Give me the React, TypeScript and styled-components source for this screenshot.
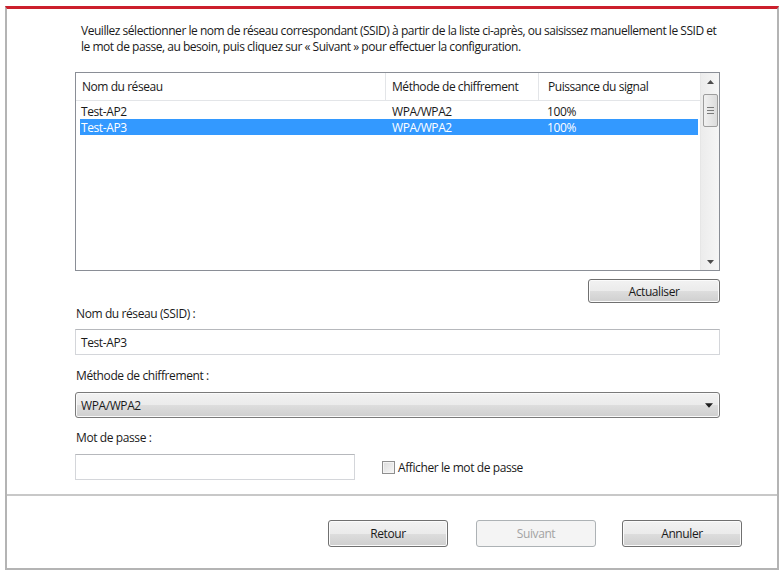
import React from "react";
import styled, { createGlobalStyle, css } from "styled-components";

const GlobalStyle = createGlobalStyle`
  html, body { margin: 0; padding: 0; background: #ffffff; }
  body {
    font-family: "Segoe UI", "Open Sans", "Noto Sans", sans-serif;
    font-size: 12px;
    color: #1a1a1a;
  }
  * { box-sizing: border-box; }
`;

const Frame = styled.div`
  margin: 6px 0 0 5px;
  width: 774px;
  height: 564px;
  border-top: 3px solid #cc1f2c;
  border-left: 2px solid #b4b4b4;
  border-right: 2px solid #b4b4b4;
  border-bottom: 2px solid #b4b4b4;
  display: flex;
  flex-direction: column;
`;

const Main = styled.div`
  flex: 1;
  padding: 14px 57px 0 68px;
  display: flex;
  flex-direction: column;
`;

const Instructions = styled.div`
  padding-left: 6px;
  line-height: 16px;
  letter-spacing: -0.47px;
`;

const Line = styled.div`
  white-space: nowrap;
`;

const ListBox = styled.div`
  margin-top: 17px;
  height: 199px;
  border: 1px solid #8a8e96;
  display: flex;
  background: #fff;
`;

const ListArea = styled.div`
  flex: 1;
  display: flex;
  flex-direction: column;
`;

const Header = styled.div`
  height: 28px;
  border-bottom: 1px solid #e3e5e8;
  display: flex;
  align-items: center;
`;

const HeaderCell = styled.div<{ $w?: number }>`
  ${(p) => (p.$w ? css`width: ${p.$w}px;` : css`flex: 1;`)}
  height: 100%;
  display: flex;
  align-items: center;
  padding-left: 6px;
  letter-spacing: -0.45px;
  border-right: 1px solid #e3e5e8;
  &:last-child { border-right: none; padding-left: 9px; }
`;

const Rows = styled.div`
  padding: 2px 2px 0 4px;
`;

const Row = styled.div<{ $selected?: boolean }>`
  height: 16px;
  display: flex;
  align-items: center;
  letter-spacing: -0.4px;
  ${(p) =>
    p.$selected &&
    css`
      background: #3399ff;
      color: #ffffff;
    `}
`;

const Cell = styled.div<{ $w?: number }>`
  ${(p) => (p.$w ? css`width: ${p.$w}px;` : css`flex: 1;`)}
  padding-left: 1px;
  &:nth-child(2) { padding-left: 7px; }
  &:nth-child(3) { padding-left: 9px; }
`;

const ScrollBar = styled.div`
  width: 19px;
  border-left: 1px solid #e6e6e6;
  background: linear-gradient(to right, #ececec, #f6f6f6);
  display: flex;
  flex-direction: column;
  align-items: center;
`;

const ArrowBtn = styled.div`
  width: 17px;
  height: 17px;
  display: flex;
  align-items: center;
  justify-content: center;
`;

const Thumb = styled.div`
  margin-top: 4px;
  width: 15px;
  height: 33px;
  border: 1px solid #9d9d9d;
  border-radius: 2px;
  background: linear-gradient(to right, #f1f1f1, #dcdcdc);
  display: flex;
  align-items: center;
  justify-content: center;
`;

const Track = styled.div`
  flex: 1;
`;

const Win7Button = styled.button<{ $disabled?: boolean }>`
  font-family: inherit;
  font-size: 12px;
  letter-spacing: -0.4px;
  color: #1a1a1a;
  border: 1px solid #707070;
  border-radius: 3px;
  background: linear-gradient(to bottom, #f2f2f2 0%, #ebebeb 50%, #dddddd 51%, #cfcfcf 100%);
  box-shadow: inset 0 0 0 1px #fbfbfb;
  padding: 0;
  ${(p) =>
    p.$disabled &&
    css`
      color: #a3a3a3;
      border-color: #adb2b5;
      background: #f4f4f4;
      box-shadow: none;
    `}
`;

const RefreshRow = styled.div`
  margin-top: 8px;
  display: flex;
  justify-content: flex-end;
`;

const RefreshButton = styled(Win7Button)`
  width: 132px;
  height: 24px;
`;

const Label = styled.div<{ $top: number }>`
  margin-top: ${(p) => p.$top}px;
  height: 16px;
  line-height: 16px;
  padding-left: 1px;
  letter-spacing: -0.4px;
`;

const TextBox = styled.div<{ $w?: number }>`
  margin-top: 7px;
  height: 26px;
  ${(p) => (p.$w ? css`width: ${p.$w}px;` : "")}
  border: 1px solid #d4d6da;
  border-top-color: #b6b8bc;
  background: #fff;
  display: flex;
  align-items: center;
  padding-left: 5px;
  letter-spacing: -0.4px;
`;

const Select = styled.div`
  margin-top: 8px;
  height: 26px;
  border: 1px solid #7a7a7a;
  border-radius: 3px;
  background: linear-gradient(to bottom, #f2f2f2 0%, #ebebeb 50%, #dddddd 51%, #cfcfcf 100%);
  box-shadow: inset 0 0 0 1px #fafafa;
  display: flex;
  align-items: center;
  justify-content: space-between;
  padding: 0 6px 0 5px;
  letter-spacing: -0.4px;
`;

const PasswordRow = styled.div`
  margin-top: 8px;
  display: flex;
  align-items: center;
`;

const CheckLabel = styled.label`
  margin-left: 27px;
  display: flex;
  align-items: center;
  gap: 3px;
  letter-spacing: -0.4px;
`;

const CheckBox = styled.span`
  width: 13px;
  height: 13px;
  border: 1px solid #8f8f8f;
  background: linear-gradient(135deg, #dcdcdc, #f7f7f7);
  box-shadow: inset 0 0 0 1px #f4f4f4;
`;

const Footer = styled.div`
  height: 74px;
  border-top: 2px solid #c8c8c8;
  display: flex;
  justify-content: flex-end;
  align-items: flex-start;
  padding: 24px 35px 0 0;
`;

const FooterButton = styled(Win7Button)<{ $gap: number }>`
  width: 120px;
  height: 27px;
  margin-left: ${(p) => p.$gap}px;
`;

const UpArrow = () => (
  <svg width="7" height="4" viewBox="0 0 7 4">
    <path d="M0 4 L3.5 0 L7 4 Z" fill="#4d4d4d" />
  </svg>
);

const DownArrow = ({ color = "#4d4d4d", w = 7 }: { color?: string; w?: number }) => (
  <svg width={w} height={Math.round(w / 1.75)} viewBox="0 0 7 4">
    <path d="M0 0 L7 0 L3.5 4 Z" fill={color} />
  </svg>
);

const Grip = () => (
  <svg width="7" height="7" viewBox="0 0 7 7">
    <path d="M0 0.5 H7 M0 3.5 H7 M0 6.5 H7" stroke="#7a7a7a" strokeWidth="1" />
  </svg>
);

const networks = [
  { name: "Test-AP2", method: "WPA/WPA2", signal: "100%", selected: false },
  { name: "Test-AP3", method: "WPA/WPA2", signal: "100%", selected: true },
];

export default function App() {
  return (
    <>
      <GlobalStyle />
      <Frame>
        <Main>
          <Instructions>
            <Line>
              Veuillez sélectionner le nom de réseau correspondant (SSID) à partir de la liste ci-après, ou saisissez manuellement le SSID et
            </Line>
            <Line>le mot de passe, au besoin, puis cliquez sur « Suivant » pour effectuer la configuration.</Line>
          </Instructions>

          <ListBox>
            <ListArea>
              <Header>
                <HeaderCell $w={310}>Nom du réseau</HeaderCell>
                <HeaderCell $w={153}>Méthode de chiffrement</HeaderCell>
                <HeaderCell>Puissance du signal</HeaderCell>
              </Header>
              <Rows>
                {networks.map((n) => (
                  <Row key={n.name} $selected={n.selected}>
                    <Cell $w={305}>{n.name}</Cell>
                    <Cell $w={153}>{n.method}</Cell>
                    <Cell>{n.signal}</Cell>
                  </Row>
                ))}
              </Rows>
            </ListArea>
            <ScrollBar>
              <ArrowBtn>
                <UpArrow />
              </ArrowBtn>
              <Thumb>
                <Grip />
              </Thumb>
              <Track />
              <ArrowBtn>
                <DownArrow />
              </ArrowBtn>
            </ScrollBar>
          </ListBox>

          <RefreshRow>
            <RefreshButton>Actualiser</RefreshButton>
          </RefreshRow>

          <Label $top={3}>Nom du réseau (SSID) :</Label>
          <TextBox>Test-AP3</TextBox>

          <Label $top={13}>Méthode de chiffrement :</Label>
          <Select>
            <span>WPA/WPA2</span>
            <DownArrow color="#1e1e1e" w={8} />
          </Select>

          <Label $top={12}>Mot de passe :</Label>
          <PasswordRow>
            <TextBox $w={280} style={{ marginTop: 0 }} />
            <CheckLabel>
              <CheckBox />
              Afficher le mot de passe
            </CheckLabel>
          </PasswordRow>
        </Main>
        <Footer>
          <FooterButton $gap={0}>Retour</FooterButton>
          <FooterButton $gap={28} $disabled>
            Suivant
          </FooterButton>
          <FooterButton $gap={26}>Annuler</FooterButton>
        </Footer>
      </Frame>
    </>
  );
}
